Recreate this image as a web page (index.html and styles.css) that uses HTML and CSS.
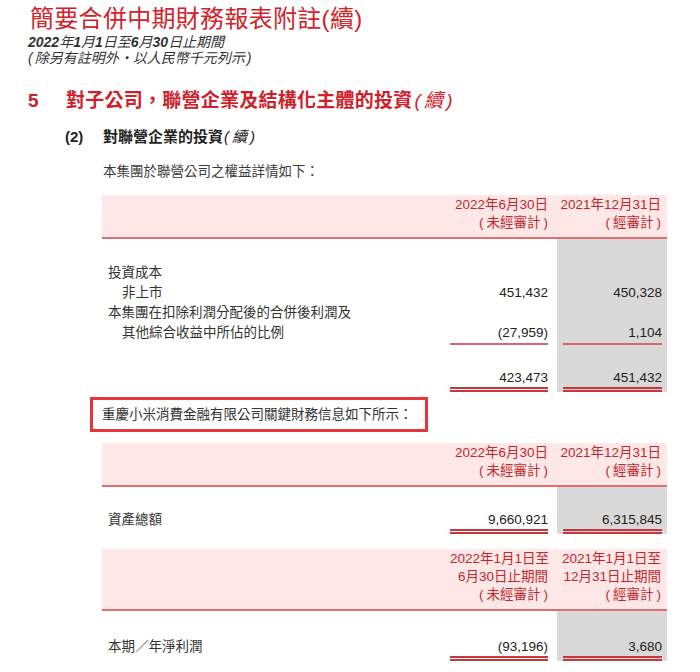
FILE: index.html
```html
<!DOCTYPE html>
<html lang="zh-Hant">
<head>
<meta charset="utf-8">
<title>簡要合併中期財務報表附註(續)</title>
<link rel="stylesheet" href="styles.css">
</head>
<body>
<div class="page">
  <h1 class="title">簡要合併中期財務報表附註(續)</h1>
  <p class="sub"><span class="n">2022</span>年<span class="n">1</span>月<span class="n">1</span>日至<span class="n">6</span>月<span class="n">30</span>日止期間</p>
  <p class="sub"><span class="pl">(</span>除另有註明外・以人民幣千元列示<span class="pr">)</span></p>

  <h2 class="sec"><span class="sec-no">5</span><span class="sec-title">對子公司，聯營企業及結構化主體的投資<i><span class="pl">(</span>續<span class="pr">)</span></i></span></h2>
  <h3 class="subsec"><span class="subsec-no">(2)</span><span>對聯營企業的投資<i><span class="pl">(</span>續<span class="pr">)</span></i></span></h3>
  <p class="intro">本集團於聯營公司之權益詳情如下：</p>

  <div class="fin">
    <div class="fin-head">
      <div></div>
      <div class="h1">2022年6月30日<br><span class="pl">(</span>未經審計<span class="pr">)</span></div>
      <div class="h2">2021年12月31日<br><span class="pl">(</span>經審計<span class="pr">)</span></div>
    </div>
    <div class="fin-body">
      <div class="sp24"></div><div class="sp24"></div><div class="c2 sp24"></div>

      <div class="c0">投資成本</div><div class="c1"></div><div class="c2"></div>

      <div class="c0 ind">非上市</div><div class="c1">451,432</div><div class="c2">450,328</div>

      <div class="c0">本集團在扣除利潤分配後的合併後利潤及</div><div class="c1"></div><div class="c2"></div>

      <div class="c0 ind">其他綜合收益中所佔的比例</div>
      <div class="c1"><span class="amt u1">(27,959)</span></div>
      <div class="c2"><span class="amt u1">1,104</span></div>

      <div class="sp24"></div><div class="sp24"></div><div class="c2 sp24"></div>

      <div class="c0"></div>
      <div class="c1"><span class="amt u2">423,473</span></div>
      <div class="c2"><span class="amt u2">451,432</span></div>
    </div>
  </div>

  <div class="note">重慶小米消費金融有限公司關鍵財務信息如下所示：</div>

  <div class="fin t2">
    <div class="fin-head">
      <div></div>
      <div class="h1">2022年6月30日<br><span class="pl">(</span>未經審計<span class="pr">)</span></div>
      <div class="h2">2021年12月31日<br><span class="pl">(</span>經審計<span class="pr">)</span></div>
    </div>
    <div class="fin-body">
      <div class="sp24"></div><div class="sp24"></div><div class="c2 sp24"></div>
      <div class="c0 tot">資產總額</div>
      <div class="c1"><span class="amt u2">9,660,921</span></div>
      <div class="c2"><span class="amt u2">6,315,845</span></div>
    </div>
  </div>

  <div class="fin t3">
    <div class="fin-head">
      <div></div>
      <div class="h1">2022年1月1日至<br>6月30日止期間<br><span class="pl">(</span>未經審計<span class="pr">)</span></div>
      <div class="h2">2021年1月1日至<br>12月31日止期間<br><span class="pl">(</span>經審計<span class="pr">)</span></div>
    </div>
    <div class="fin-body">
      <div class="sp28"></div><div class="sp28"></div><div class="c2 sp28"></div>
      <div class="c0 tot">本期／年淨利潤</div>
      <div class="c1"><span class="amt u2">(93,196)</span></div>
      <div class="c2"><span class="amt u2">3,680</span></div>
    </div>
  </div>
</div>
</body>
</html>
```

FILE: styles.css
```css
html, body {
  margin: 0;
  padding: 0;
  background: #ffffff;
}

body {
  font-family: "Liberation Sans", "Noto Sans CJK TC", sans-serif;
  color: #3a3a3a;
}

.page {
  padding: 4px 0 0 28px;
}

.pl {
  margin-right: 3px;
}

.pr {
  margin-left: 3px;
}

.title {
  margin: 0 0 0 2px;
  font-size: 24px;
  line-height: 30px;
  font-weight: 400;
  color: #d2232a;
  letter-spacing: 0.3px;
}

.title .pl,
.title .pr {
  margin: 0;
}

.sub {
  margin: 0;
  font-size: 14px;
  line-height: 16px;
  font-style: italic;
  color: #333333;
}

.sub .n {
  font-weight: bold;
}

.sub .pl {
  margin-right: 2px;
}

.sub .pr {
  margin-left: 2px;
}

.sec {
  display: flex;
  margin: 23px 0 0 0;
  font-size: 19px;
  line-height: 24px;
  font-weight: bold;
  color: #d0202c;
}

.sec-no {
  width: 38px;
}

.sec-title {
  letter-spacing: 0.25px;
}

.sec i {
  font-weight: 400;
  margin-left: 2px;
}

.subsec {
  display: flex;
  margin: 14px 0 0 37px;
  font-size: 15px;
  line-height: 20px;
  font-weight: bold;
  color: #231f20;
}

.subsec-no {
  width: 38px;
}

.subsec i {
  font-weight: 400;
  margin-left: 1px;
}

.intro {
  margin: 15px 0 0 75px;
  font-size: 13.5px;
  line-height: 20px;
}

.fin {
  margin: 13px 0 0 74px;
  width: 565px;
}

.fin.t2 {
  margin-top: 11px;
}

.fin.t3 {
  margin-top: 15px;
}

.fin-head {
  display: grid;
  grid-template-columns: 1fr 107px 110px;
  background: #fde7e7;
  border-bottom: 2px solid #e07070;
  padding: 1px 0 5px 0;
  color: #c1272d;
  font-size: 13.5px;
  line-height: 18px;
}

.h1 {
  text-align: right;
  padding-right: 9px;
  white-space: nowrap;
}

.h2 {
  text-align: right;
  padding-right: 6px;
  white-space: nowrap;
}

.fin-body {
  display: grid;
  grid-template-columns: 1fr 107px 110px;
  font-size: 13.5px;
  line-height: 20px;
}

.c0 {
  padding-left: 6px;
  color: #333333;
}

.c0.ind {
  padding-left: 20px;
}

.c0.tot {
  line-height: 18px;
}

.c1 {
  text-align: right;
  padding-right: 9px;
  color: #222222;
}

.c2 {
  text-align: right;
  padding: 0 5px 0 6px;
  background: #d9d9d9;
  color: #222222;
}

.amt {
  display: block;
}

.u1 {
  border-bottom: 2px solid #d9666c;
}

.u2 {
  line-height: 18px;
  border-bottom: 5px double #c6363c;
}

.sp24 {
  height: 24px;
}

.sp28 {
  height: 27px;
}

.note {
  margin: 5px 0 0 62px;
  width: 338px;
  height: 35px;
  box-sizing: border-box;
  border: 3px solid #e2363c;
  padding-left: 9px;
  font-size: 13.5px;
  line-height: 29px;
  color: #333333;
}
```
